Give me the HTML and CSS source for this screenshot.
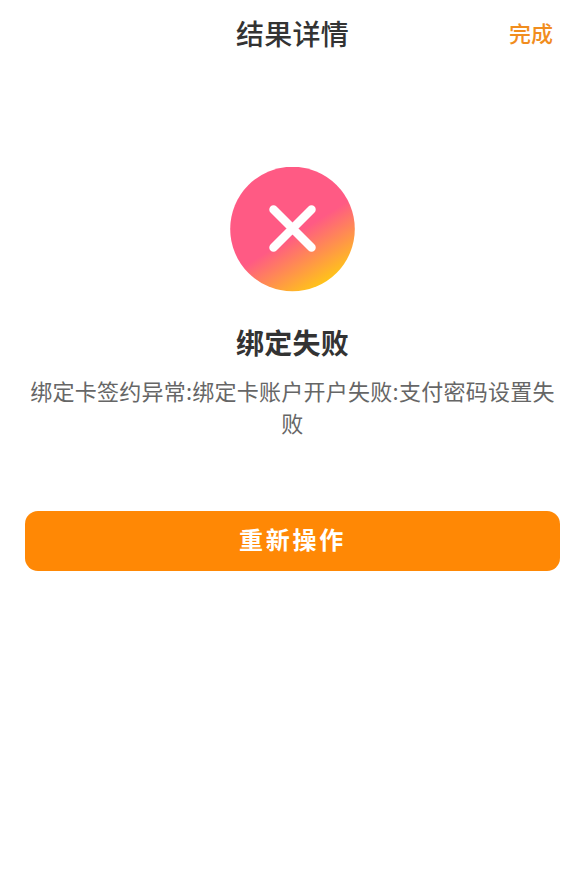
FILE: index.html
```
<!DOCTYPE html>
<html lang="zh-CN">
<head>
<meta charset="utf-8">
<title>结果详情</title>
<link rel="stylesheet" href="styles.css">
</head>
<body>
<header class="nav">
  <h1 class="nav-title">结果详情</h1>
  <a class="nav-done">完成</a>
</header>
<main class="result">
  <svg class="result-icon" viewBox="0 0 125 125" width="125" height="125" aria-hidden="true">
    <defs>
      <linearGradient id="failGradient" x1="0.25" y1="0.2" x2="0.74" y2="0.98">
        <stop offset="0.47" stop-color="#ff5a84"/>
        <stop offset="1" stop-color="#ffcb12"/>
      </linearGradient>
    </defs>
    <circle cx="62.5" cy="62" r="62.3" fill="url(#failGradient)"/>
    <path d="M43.5 42.5 L81.5 80.5 M81.5 42.5 L43.5 80.5" stroke="#fff" stroke-width="8.5" stroke-linecap="round" fill="none"/>
  </svg>
  <h2 class="result-title">绑定失败</h2>
  <p class="result-desc">绑定卡签约异常:绑定卡账户开户失败:支付密码设置失败</p>
  <button class="result-btn">重新操作</button>
</main>
</body>
</html>
```
FILE: styles.css
```
* { box-sizing: border-box; }
html, body { margin: 0; padding: 0; background: #fff; }
body {
  width: 585px;
  height: 886px;
  overflow: hidden;
  font-family: "Noto Sans CJK SC", "Liberation Sans", sans-serif;
}
.nav {
  position: relative;
  height: 66px;
  display: flex;
  align-items: center;
  justify-content: center;
}
.nav-title {
  margin: 0;
  font-size: 28px;
  font-weight: 500;
  letter-spacing: 0.3px;
  color: #333;
}
.nav-done {
  position: absolute;
  right: 32px;
  top: 32px;
  transform: translateY(-50%);
  font-size: 22px;
  font-weight: 500;
  color: #f18d1e;
}
.result {
  display: flex;
  flex-direction: column;
  align-items: center;
  padding: 101px 25px 0;
}
.result-icon { display: block; }
.result-title {
  margin: 30px 0 0;
  font-size: 28px;
  line-height: 40px;
  font-weight: 700;
  letter-spacing: 0.3px;
  color: #333;
}
.result-desc {
  margin: 12px 0 0;
  width: 535px;
  font-size: 22px;
  line-height: 32px;
  letter-spacing: 0.25px;
  color: #666;
  text-align: center;
}
.result-btn {
  margin-top: 73px;
  width: 535px;
  height: 60px;
  padding: 0 0 5px;
  border: 0;
  border-radius: 13px;
  background: #ff8805;
  color: #fff;
  font-family: inherit;
  font-size: 24px;
  font-weight: 700;
  letter-spacing: 2.8px;
}
```
